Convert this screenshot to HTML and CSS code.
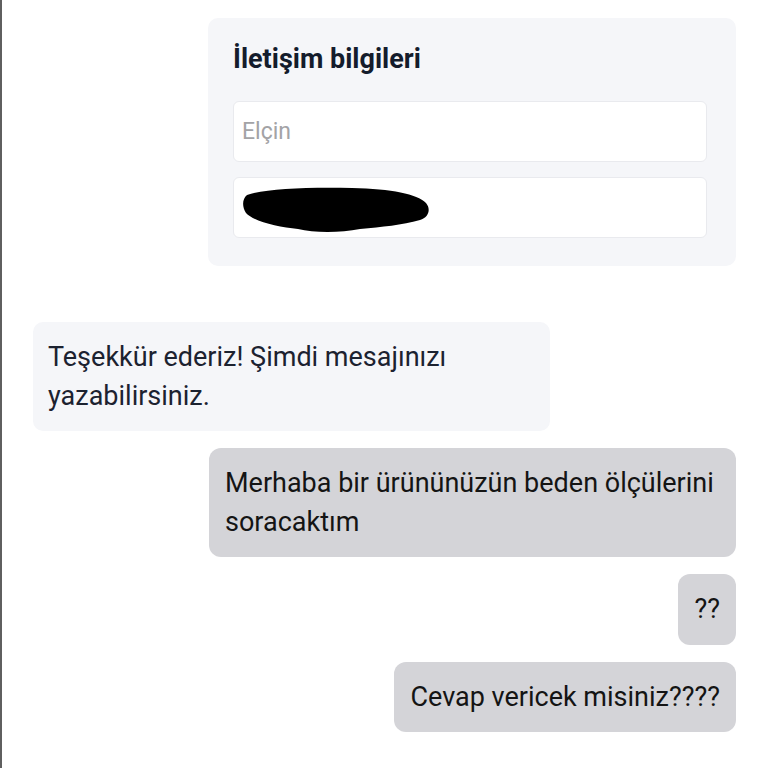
FILE: index.html
```html
<!DOCTYPE html>
<html lang="tr">
<head>
<meta charset="utf-8">
<link rel="stylesheet" href="styles.css">
</head>
<body>
<div class="screen">
  <div class="chat">
    <div class="row row-right">
      <div class="card">
        <div class="card-title">İletişim bilgileri</div>
        <div class="field"><span class="placeholder">Elçin</span></div>
        <div class="field">
          <svg class="redact" width="188" height="48" viewBox="0 0 188 48">
            <path d="M5,9 C22,3 62,1 110,2 C150,3 175,8 184,17 C189,23 187,31 178,34 C160,39 140,41 118,43 C98,47 72,47 56,43 C36,41 11,35 4,27 C0,21 0,13 5,9 Z" fill="#000"/>
          </svg>
        </div>
      </div>
    </div>
    <div class="row row-left bot-row">
      <div class="bubble bot">Teşekkür ederiz! Şimdi mesajınızı yazabilirsiniz.</div>
    </div>
    <div class="row row-right">
      <div class="bubble user wide">Merhaba bir ürününüzün beden ölçülerini soracaktım</div>
    </div>
    <div class="row row-right">
      <div class="bubble user">??</div>
    </div>
    <div class="row row-right">
      <div class="bubble user">Cevap vericek misiniz????</div>
    </div>
  </div>
</div>
</body>
</html>
```
FILE: styles.css
```css
html, body {
  margin: 0;
  padding: 0;
  background: #ffffff;
}
body {
  font-family: Roboto, "Noto Sans", sans-serif;
  color: #1c2230;
}
.screen {
  width: 768px;
  height: 768px;
  overflow: hidden;
  box-sizing: border-box;
  border-left: 2px solid #5f5f5f;
  background: #ffffff;
  position: relative;
}
.screen::before {
  content: "";
  position: absolute;
  left: -2px;
  top: 0;
  width: 2px;
  height: 196px;
  background: #e6e6e6;
}
.chat {
  display: flex;
  flex-direction: column;
  padding: 18px 32px 0 31px;
}
.row {
  display: flex;
}
.row-right { justify-content: flex-end; }
.row-left { justify-content: flex-start; }
.card {
  width: 528px;
  box-sizing: border-box;
  background: #f5f6f9;
  border-radius: 10px;
  padding: 25px 29px 28px 25px;
  display: flex;
  flex-direction: column;
  gap: 15px;
}
.card-title {
  font-weight: 700;
  font-size: 27px;
  line-height: 32px;
  color: #141c2c;
  margin-bottom: 11px;
}
.field {
  height: 61px;
  box-sizing: border-box;
  background: #ffffff;
  border: 1px solid #e9eaee;
  border-radius: 6px;
  display: flex;
  align-items: center;
  padding-left: 8px;
}
.placeholder {
  font-size: 23px;
  color: #a3a3a6;
}
.redact {
  display: block;
  margin-top: 4px;
}
.bot-row { margin-top: 56px; }
.bubble {
  box-sizing: border-box;
  font-size: 27px;
  line-height: 38.5px;
  padding: 16px 16px 16px 16px;
  border-radius: 10px;
}
.bot {
  width: 517px;
  background: #f5f6f9;
  color: #1c2230;
  padding-left: 15px;
}
.user {
  background: #d4d4d8;
  color: #141414;
  margin-top: 17px;
  border-radius: 12px;
}
.wide { width: 527px; }
```
